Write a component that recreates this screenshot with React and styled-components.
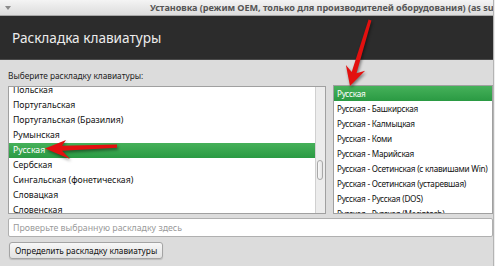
import React from "react";
import styled, { createGlobalStyle } from "styled-components";

const GlobalStyle = createGlobalStyle`
    html, body {
        margin: 0;
        padding: 0;
        background: #ededed;
    }
    body {
        width: 495px;
        height: 266px;
        overflow: hidden;
        font-family: "Noto Sans", "Open Sans", sans-serif;
    }
`;

const Window = styled.div`
    position: relative;
    width: 493px;
    height: 266px;
    display: flex;
    flex-direction: column;
    background: #dcdcdc;
    border-right: 1px solid #b4b4b4;
    overflow: hidden;
`;

const TitleBar = styled.div`
    height: 16px;
    flex: none;
    display: flex;
    align-items: center;
    background: linear-gradient(#f4f4f4, #dcdcdc);
    border-bottom: 1px solid #a8a8a8;
    box-sizing: border-box;
    overflow: hidden;
`;

const MenuTriangle = styled.span`
    width: 0;
    height: 0;
    margin-left: 5px;
    border-left: 3px solid transparent;
    border-right: 3px solid transparent;
    border-top: 4px solid #8a8a8a;
`;

const WindowTitle = styled.span`
    margin-left: 139px;
    font-size: 9.1px;
    letter-spacing: -0.05px;
    font-weight: 700;
    color: #555;
    white-space: nowrap;
`;

const Header = styled.div`
    height: 44px;
    flex: none;
    display: flex;
    align-items: center;
    padding-left: 12px;
    background: #2c2c2c;
    color: #ececec;
    font-size: 13.6px;
    border-bottom: 1px solid #4a4a4a;
    box-sizing: border-box;
`;

const Body = styled.div`
    flex: 1;
    display: flex;
    flex-direction: column;
    padding: 10px 0 0 8px;
`;

const Label = styled.div`
    font-size: 8.3px;
    line-height: 12px;
    color: #1e1e1e;
`;

const Lists = styled.div`
    display: flex;
    align-items: flex-end;
    gap: 7px;
    margin-top: 3px;
`;

const ListBox = styled.div`
    width: ${(p) => p.$width}px;
    height: ${(p) => p.$height}px;
    display: flex;
    background: #fff;
    border: 1px solid #a0a0a0;
    box-sizing: border-box;
    overflow: hidden;
`;

const Items = styled.div`
    flex: 1;
    min-width: 0;
    margin-top: ${(p) => p.$offset}px;
`;

const Item = styled.div`
    height: 15px;
    line-height: 15px;
    padding-left: ${(p) => p.$pad}px;
    font-size: ${(p) => p.$size}px;
    letter-spacing: ${(p) => p.$spacing || 0}px;
    white-space: nowrap;
    color: ${(p) => (p.$selected ? "#fff" : "#111")};
    background: ${(p) => (p.$selected ? "linear-gradient(#46b15a, #2a9a43)" : "transparent")};
`;

const ScrollTrack = styled.div`
    width: 10px;
    flex: none;
    background: #ececec;
    border-left: 1px solid #d0d0d0;
    box-sizing: border-box;
`;

const ScrollThumb = styled.div`
    width: 6px;
    height: 20px;
    margin: 73px 0 0 1px;
    background: linear-gradient(90deg, #fafafa, #e4e4e4);
    border: 1px solid #a8a8a8;
    border-radius: 3px;
    box-sizing: border-box;
`;

const Input = styled.div`
    width: 485px;
    height: 19px;
    margin-top: 4px;
    display: flex;
    align-items: center;
    padding-left: 4px;
    background: #fff;
    border: 1px solid #b0b0b0;
    border-radius: 2px;
    box-sizing: border-box;
    font-size: 8.8px;
    color: #9a9a9a;
`;

const Button = styled.div`
    align-self: flex-start;
    height: 17px;
    margin: 5px 0 0 1px;
    padding: 0 5px;
    display: flex;
    align-items: center;
    background: linear-gradient(#f7f7f7, #e2e2e2);
    border: 1px solid #a4a4a4;
    border-radius: 3px;
    box-shadow: 0 1px 1px rgba(0, 0, 0, 0.15);
    box-sizing: border-box;
    font-size: 8.3px;
    color: #111;
`;

const Overlay = styled.svg`
    position: absolute;
    left: 0;
    top: 0;
    pointer-events: none;
    filter: drop-shadow(1px 2px 1.5px rgba(0, 0, 0, 0.45));
`;

const leftItems = [
    "Польская",
    "Португальская",
    "Португальская (Бразилия)",
    "Румынская",
    "Русская",
    "Сербская",
    "Сингальская (фонетическая)",
    "Словацкая",
    "Словенская",
];

const rightItems = [
    "Русская",
    "Русская - Башкирская",
    "Русская - Калмыцкая",
    "Русская - Коми",
    "Русская - Марийская",
    "Русская - Осетинская (с клавишами Win)",
    "Русская - Осетинская (устаревшая)",
    "Русская - Русская (DOS)",
    "Русская - Русская (Macintosh)",
];

const App = () => {
    return (
        <>
            <GlobalStyle />
            <Window>
                <TitleBar>
                    <MenuTriangle />
                    <WindowTitle>
                        Установка (режим OEM, только для производителей оборудования) (as superuser)
                    </WindowTitle>
                </TitleBar>
                <Header>Раскладка клавиатуры</Header>
                <Body>
                    <Label>Выберите раскладку клавиатуры:</Label>
                    <Lists>
                        <ListBox $width={318} $height={128}>
                            <Items $offset={-4}>
                                {leftItems.map((name) => (
                                    <Item key={name} $pad={4} $size={8.7} $selected={name === "Русская"}>
                                        {name}
                                    </Item>
                                ))}
                            </Items>
                            <ScrollTrack>
                                <ScrollThumb />
                            </ScrollTrack>
                        </ListBox>
                        <ListBox $width={160} $height={129}>
                            <Items $offset={0}>
                                {rightItems.map((name, i) => (
                                    <Item key={name} $pad={3} $size={8.2} $spacing={-0.25} $selected={i === 0}>
                                        {name}
                                    </Item>
                                ))}
                            </Items>
                        </ListBox>
                    </Lists>
                    <Input>Проверьте выбранную раскладку здесь</Input>
                    <Button>Определить раскладку клавиатуры</Button>
                </Body>
                <Overlay width="495" height="266" viewBox="0 0 495 266">
                    <polygon
                        fill="#e3100f"
                        points="368.6,19.6 371.4,20.4 356.5,73.3 365.1,70.7 350,86 345.9,64.9 351.7,71.9"
                    />
                    <polygon
                        fill="#e3100f"
                        points="117,144.5 117,147.8 62,150.8 70,159 45,148.5 66,140 62,145.8"
                    />
                </Overlay>
            </Window>
        </>
    );
};

export default App;
